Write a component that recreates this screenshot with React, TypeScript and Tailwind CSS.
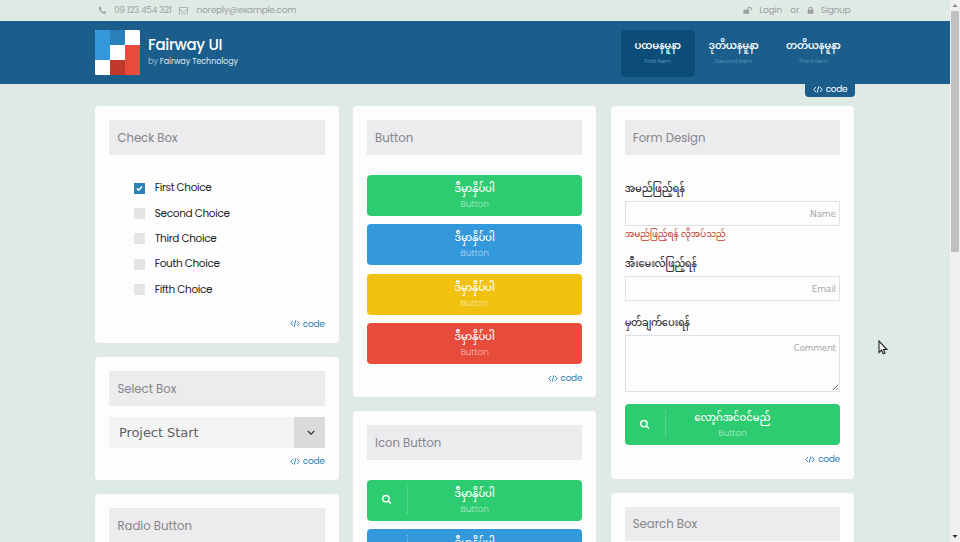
import type { ReactNode } from 'react';

const SEARCH =
  'M1152 832q0-185-131.5-316.5t-316.5-131.5-316.5 131.5-131.5 316.5 131.5 316.5 316.5 131.5 316.5-131.5 131.5-316.5zm512 832q0 52-38 90t-90 38q-54 0-90-38l-343-342q-179 124-399 124-143 0-273.5-55.5t-225-150-150-225-55.5-273.5 55.5-273.5 150-225 225-150 273.5-55.5 273.5 55.5 225 150 150 225 55.5 273.5q0 220-124 399l343 343q37 37 37 90z';
const PHONE =
  'M1600 1240q0 27-10 70.5t-21 68.5q-21 50-122 106-94 51-186 51-27 0-53-3.5t-57.5-12.5-47-14.5-55.5-20.5-49-18q-98-35-175-83-127-79-264-216t-216-264q-48-77-83-175-3-9-18-49t-20.5-55.5-14.5-47-12.5-57.5-3.5-53q0-92 51-186 56-101 106-122 25-11 68.5-21t70.5-10q14 0 21 3 18 6 53 76 11 19 30 54t35 63.5 31 53.5q3 4 17.5 25t21.5 35.5 7 28.5q0 20-28.5 50t-62 55-62 53-28.5 46q0 9 5 22.5t8.5 20.5 14 24 11.5 19q76 137 174 235t235 174q2 1 19 11.5t24 14 20.5 8.5 22.5 5q18 0 46-28.5t53-62 55-62 50-28.5q14 0 28.5 7t35.5 21.5 25 17.5q25 15 53.5 31t63.5 35 54 30q70 35 76 53 3 7 3 21z';
const MAIL =
  'M1664 1504v-768q-32 36-69 66-268 206-426 338-51 43-83 67t-86.5 48.5-102.5 24.5h-2q-48 0-102.5-24.5t-86.5-48.5-83-67q-158-132-426-338-37-30-69-66v768q0 13 9.5 22.5t22.5 9.5h1472q13 0 22.5-9.5t9.5-22.5zm0-1051v-24.5l-.5-13-3-12.5-5.5-9-9-7.5-14-2.5h-1472q-13 0-22.5 9.5t-9.5 22.5q0 168 147 284 193 152 401 317 6 5 35 29.5t46 37.5 44.5 31.5 50.5 27.5 43 9h2q20 0 43-9t50.5-27.5 44.5-31.5 46-37.5 35-29.5q208-165 401-317 54-43 100.5-115.5t46.5-131.5zm128-37v1088q0 66-47 113t-113 47h-1472q-66 0-113-47t-47-113v-1088q0-66 47-113t113-47h1472q66 0 113 47t47 113z';
const LOCK =
  'M640 768h512v-192q0-106-75-181t-181-75-181 75-75 181v192zm832 96v576q0 40-28 68t-68 28h-960q-40 0-68-28t-28-68v-576q0-40 28-68t68-28h32v-192q0-184 132-316t316-132 316 132 132 316v192h32q40 0 68 28t28 68z';
const UNLOCK =
  'M1728 576v256q0 26-19 45t-45 19h-64q-26 0-45-19t-19-45v-256q0-106-75-181t-181-75-181 75-75 181v192h96q40 0 68 28t28 68v576q0 40-28 68t-68 28h-960q-40 0-68-28t-28-68v-576q0-40 28-68t68-28h672v-192q0-185 131.5-316.5t316.5-131.5 316.5 131.5 131.5 316.5z';

function Icon({ d, className }: { d: string; className: string }) {
  return (
    <svg viewBox="0 0 1792 1792" fill="currentColor" className={`shrink-0 ${className}`}>
      <path d={d} />
    </svg>
  );
}

function CodeLabel() {
  return (
    <>
      <svg
        viewBox="0 0 20 14"
        fill="none"
        stroke="currentColor"
        strokeWidth="1.8"
        className="h-[7px] w-[10px] shrink-0"
      >
        <path d="M6 2 1.5 7 6 12M14 2l4.500 5L14 12M11.600 .5 8.400 13.500" />
      </svg>
      <span className="text-[9px] leading-3 tracking-[-0.3px]">code</span>
    </>
  );
}

function CodeLink({ className }: { className: string }) {
  return (
    <a className={`flex items-center justify-end gap-[3px] text-[#2a80b9] ${className}`}>
      <CodeLabel />
    </a>
  );
}

function Card({ title, className, children }: { title: string; className: string; children?: ReactNode }) {
  return (
    <section className={`flex shrink-0 flex-col rounded-[4px] bg-[#fefdfe] px-[14.2px] pt-[14px] ${className}`}>
      <h2 className="flex h-[34.5px] shrink-0 items-center bg-[#ecebee] pt-[3px] pl-[8px] text-[11.700px] text-[#858585]">
        {title}
      </h2>
      {children}
    </section>
  );
}

function ActionButton({ color, label, icon }: { color: string; label: string; icon?: boolean }) {
  return (
    <button className={`relative flex h-[41px] w-full shrink-0 flex-col items-center rounded-[4px] pt-[6px] text-white ${color}`}>
      {icon && (
        <span className="absolute top-[6px] left-0 flex h-[27px] w-[41px] items-center justify-center border-r border-dotted border-white/40">
          <Icon d={SEARCH} className="h-[10px] w-[10px]" />
        </span>
      )}
      <span className="text-[10px] leading-[16px] font-medium tracking-[-0.1px]">{label}</span>
      <span className="text-[9px] leading-[15px] font-light tracking-[-0.1px] text-white/60">Button</span>
    </button>
  );
}

function NavItem({ label, sub, active }: { label: string; sub: string; active?: boolean }) {
  return (
    <a
      className={`flex h-[47px] flex-col items-center rounded-[4px] pt-[8.500px] whitespace-nowrap ${
        active ? 'w-[74px] bg-[#0b4c78]' : 'w-[78px]'
      }`}
    >
      <span className="text-[10px] leading-[16px] font-semibold tracking-[-0.2px] text-white">{label}</span>
      <span className="mt-[3px] text-[6px] leading-[9px] tracking-[-0.05px] text-[#5590b9]">{sub}</span>
    </a>
  );
}

const PRESS = 'ဒီမှာနှိပ်ပါ';
const choices = ['First Choice', 'Second Choice', 'Third Choice', 'Fouth Choice', 'Fifth Choice'];

export default function App() {
  return (
    <div className="relative flex h-[542px] w-[960px] overflow-hidden bg-[#e0eae4] font-[Poppins,Inter,'Noto_Sans_Myanmar','Noto_Sans',sans-serif]">
      <div className="flex w-[949.500px] flex-col">
        <div className="flex h-[21px] shrink-0 items-center pr-[98.700px] pl-[98px] text-[9px] whitespace-nowrap text-[#9b9f9f]">
          <Icon d={PHONE} className="h-[9px] w-[9px]" />
          <span className="ml-[7px] w-[58px] tracking-[-0.35px]">09 123 454 321</span>
          <Icon d={MAIL} className="ml-[7px] h-[9px] w-[9px]" />
          <span className="ml-[8.500px] tracking-[-0.25px]">noreply@example.com</span>
          <Icon d={UNLOCK} className="ml-auto h-[9px] w-[9px]" />
          <span className="ml-[7px] w-[24px] tracking-[-0.2px]">Login</span>
          <span className="ml-[7px] w-[10px]">or</span>
          <Icon d={LOCK} className="ml-[5.500px] h-[9px] w-[9px]" />
          <span className="ml-[6px] w-[30px] tracking-[-0.3px]">Signup</span>
        </div>

        <header className="relative flex h-[63px] shrink-0 items-start bg-[#1b5e8c] pt-[8.500px] pl-[95px]">
          <div className="grid h-[45px] w-[45px] grid-cols-3 grid-rows-3 overflow-hidden rounded-[2px] bg-white">
            <i className="row-span-2 bg-[#3498db]" />
            <i className="bg-[#2a80b9]" />
            <i className="bg-white" />
            <i className="bg-white" />
            <i className="row-span-2 bg-[#e74c3c]" />
            <i className="bg-white" />
            <i className="bg-[#c0392b]" />
          </div>
          <div className="ml-[8px] flex flex-col whitespace-nowrap">
            <h1 className="pt-[5.200px] text-[15px] leading-[20px] font-medium tracking-[-0.3px] text-white">Fairway UI</h1>
            <p className="mt-[1px] text-[8px] leading-[12px] tracking-[-0.08px] text-[#dbe8f1]">
              <span className="text-[#8fb6d2]">by</span> Fairway Technology
            </p>
          </div>
          <nav className="mr-[97.200px] ml-auto flex">
            <NavItem label="ပထမနမူနာ" sub="First Item" active />
            <NavItem label="ဒုတိယနမူနာ" sub="Second Item" />
            <div className="pl-[1.700px]">
              <NavItem label="တတိယနမူနာ" sub="Third Item" />
            </div>
          </nav>
          <a className="absolute top-[62px] right-[94.500px] flex h-[14px] w-[50px] items-center justify-center gap-[3px] rounded-b-[4px] bg-[#1b5e8c] pb-[2px] text-white">
            <CodeLabel />
          </a>
        </header>

        <main className="flex gap-[14.200px] pt-[22px] pl-[95.200px]">
          <div className="flex w-[243.500px] shrink-0 flex-col gap-[14px]">
            <Card title="Check Box" className="h-[237px]">
              <ul className="mt-[25.500px] flex flex-col gap-[9.400px] pl-[24.900px]">
                {choices.map((c, i) => (
                  <li key={c} className="flex h-[16px] items-center gap-[9.500px] text-[10.500px] tracking-[-0.35px] text-[#222]">
                    <span
                      className={`flex h-[11px] w-[11px] items-center justify-center ${i === 0 ? 'bg-[#2a80b9]' : 'bg-[#e4e4e7]'}`}
                    >
                      {i === 0 && (
                        <svg viewBox="0 0 8 8" className="h-[7px] w-[7px]" fill="none" stroke="white" strokeWidth="1.8">
                          <path d="M1 4.200 3 6 7 1.800" />
                        </svg>
                      )}
                    </span>
                    {c}
                  </li>
                ))}
              </ul>
              <CodeLink className="mt-[20px]" />
            </Card>
            <Card title="Select Box" className="h-[123px]">
              <div className="mt-[11.500px] flex h-[31px] shrink-0 bg-[#f3f5f4]">
                <span className="flex flex-1 items-center pl-[9.500px] font-[DejaVu_Sans,sans-serif] text-[13px] tracking-[-0.05px] text-[#616161]">
                  Project Start
                </span>
                <span className="flex w-[31px] items-center justify-center bg-[#dbd9dc]">
                  <svg viewBox="0 0 8 6" className="mt-[1px] ml-[3px] h-[6px] w-[8px]" fill="none" stroke="#333" strokeWidth="1.300">
                    <path d="m.800 1 3.200 3.200L7.200 1" />
                  </svg>
                </span>
              </div>
              <CodeLink className="mt-[7px]" />
            </Card>
            <Card title="Radio Button" className="h-[160px]" />
          </div>

          <div className="flex w-[243.500px] shrink-0 flex-col gap-[14px]">
            <Card title="Button" className="h-[291.400px]">
              <div className="mt-[20.500px] flex flex-col gap-[8.400px]">
                <ActionButton color="bg-[#2ecc71]" label={PRESS} />
                <ActionButton color="bg-[#3398dc]" label={PRESS} />
                <ActionButton color="bg-[#f0c20f]" label={PRESS} />
                <ActionButton color="bg-[#e64b3b]" label={PRESS} />
              </div>
              <CodeLink className="mt-[8px]" />
            </Card>
            <Card title="Icon Button" className="h-[200px]">
              <div className="mt-[20px] flex flex-col gap-[8.400px]">
                <ActionButton color="bg-[#2ecc71]" label={PRESS} icon />
                <ActionButton color="bg-[#3398dc]" label={PRESS} icon />
              </div>
            </Card>
          </div>

          <div className="flex w-[243.500px] shrink-0 flex-col gap-[14px]">
            <Card title="Form Design" className="h-[372.500px]">
              <label className="mt-[24px] h-[22.500px] shrink-0 text-[10px] leading-[19px] font-medium tracking-[-0.2px] text-[#333]">
                အမည်ဖြည့်ရန်
              </label>
              <input
                placeholder="Name"
                className="h-[25px] shrink-0 border border-[#dfe1e4] px-[3px] text-right font-[DejaVu_Sans,sans-serif] text-[9px] tracking-[-0.15px] placeholder:text-[#a9a9a9]"
              />
              <p className="h-[28px] shrink-0 text-[9px] leading-[17px] tracking-[-0.2px] text-[#c0392b]">အမည်ဖြည့်ရန် လိုအပ်သည်</p>
              <label className="h-[22px] shrink-0 text-[10px] leading-[19px] font-medium tracking-[-0.45px] text-[#333]">
                အီးမေးလ်ဖြည့်ရန်
              </label>
              <input
                placeholder="Email"
                className="h-[25px] shrink-0 border border-[#dfe1e4] px-[3px] text-right font-[DejaVu_Sans,sans-serif] text-[9px] tracking-[-0.15px] placeholder:text-[#a9a9a9]"
              />
              <label className="mt-[12px] h-[22px] shrink-0 text-[10px] leading-[19px] font-medium tracking-[-0.45px] text-[#333]">
                မှတ်ချက်ပေးရန်
              </label>
              <div className="relative h-[57px] shrink-0 border border-[#dfe1e4] px-[3px] pt-[6px] text-right font-[DejaVu_Sans,sans-serif] text-[9px] leading-3 tracking-[-0.25px] text-[#a9a9a9]">
                Comment
                <svg viewBox="0 0 7 7" className="absolute right-0 bottom-0 h-[7px] w-[7px]" stroke="#555" strokeWidth=".8">
                  <path d="M1 6 6 1M4 6l2-2" />
                </svg>
              </div>
              <div className="mt-[12px] shrink-0">
                <ActionButton color="bg-[#2ecc71]" label="လော့ဂ်အင်ဝင်မည်" icon />
              </div>
              <CodeLink className="mt-[8px]" />
            </Card>
            <Card title="Search Box" className="h-[160px]" />
          </div>
        </main>
      </div>

      <div className="flex w-[10.500px] flex-col items-center bg-[#f0eff1]">
        <svg viewBox="0 0 10 11" className="h-[11px] w-[10px] shrink-0">
          <path d="M5 4 7.500 7h-5z" fill="#888" />
        </svg>
        <div className="h-[241px] w-[8px] shrink-0 bg-[#c1bfc2]" />
        <svg viewBox="0 0 10 11" className="mt-auto h-[11px] w-[10px] shrink-0">
          <path d="M2.500 4h5L5 7z" fill="#333" />
        </svg>
      </div>

      <svg viewBox="0 0 10 15" className="absolute top-[340px] left-[878px] h-[15px] w-[10px]">
        <path d="M1 1v11.500l2.500-2.300 1.700 3.600 1.800-.800-1.600-3.500H9z" fill="#f5f5f5" stroke="#222" strokeWidth="1.100" />
      </svg>
    </div>
  );
}
